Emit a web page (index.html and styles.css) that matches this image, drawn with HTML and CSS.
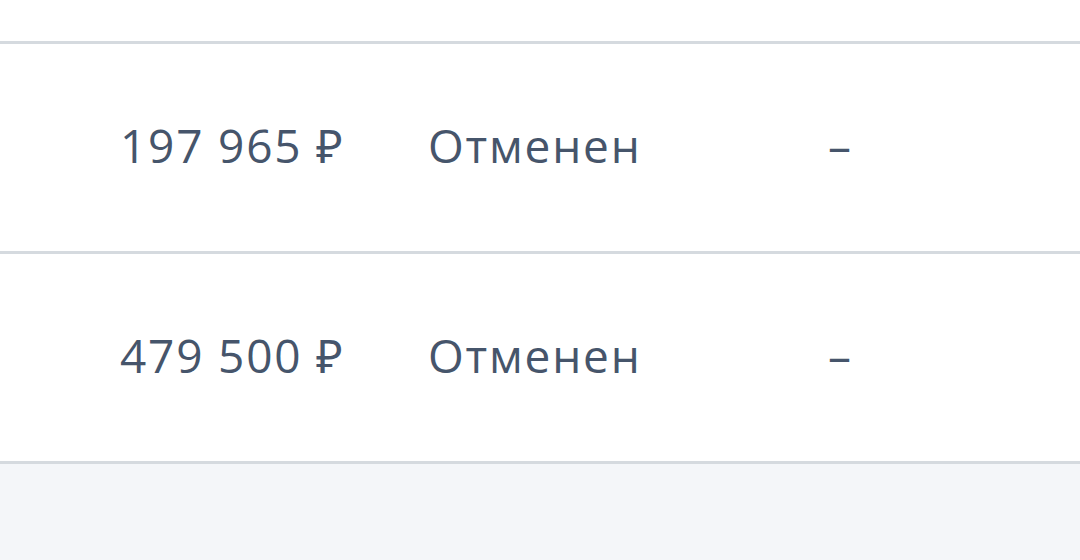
FILE: index.html
```html
<!DOCTYPE html>
<html lang="ru">
<head>
<meta charset="utf-8">
<link rel="stylesheet" href="styles.css">
</head>
<body>
<div class="page">
  <div class="table">
    <div class="row row-partial"></div>
    <div class="row">
      <div class="cell cell-sum">197 965 ₽</div>
      <div class="cell cell-status">Отменен</div>
      <div class="cell cell-extra">–</div>
    </div>
    <div class="row">
      <div class="cell cell-sum">479 500 ₽</div>
      <div class="cell cell-status">Отменен</div>
      <div class="cell cell-extra">–</div>
    </div>
  </div>
  <div class="footer-area"></div>
</div>
</body>
</html>
```

FILE: styles.css
```css
html, body {
  margin: 0;
  padding: 0;
}
body {
  width: 1080px;
  height: 560px;
  overflow: hidden;
  background: #f4f6f9;
  font-family: "Open Sans", "Noto Sans", sans-serif;
  color: #46556b;
}
.page {
  display: flex;
  flex-direction: column;
  height: 560px;
}
.table {
  background: #ffffff;
  display: flex;
  flex-direction: column;
}
.row {
  display: grid;
  grid-template-columns: 308px 400px 1fr;
  align-items: center;
  height: 207px;
  padding-left: 120px;
  padding-bottom: 5px;
  box-sizing: content-box;
  border-bottom: 3px solid #d5dadf;
}
.row:not(.row-partial) {
  height: 202px;
}
.row-partial {
  height: 41px;
  padding-bottom: 0;
}
.cell {
  font-size: 46px;
  line-height: 1;
  white-space: nowrap;
  letter-spacing: 1.8px;
}
.cell-extra {
  letter-spacing: 0;
}
.footer-area {
  flex: 1;
  background: #f4f6f9;
}
```
